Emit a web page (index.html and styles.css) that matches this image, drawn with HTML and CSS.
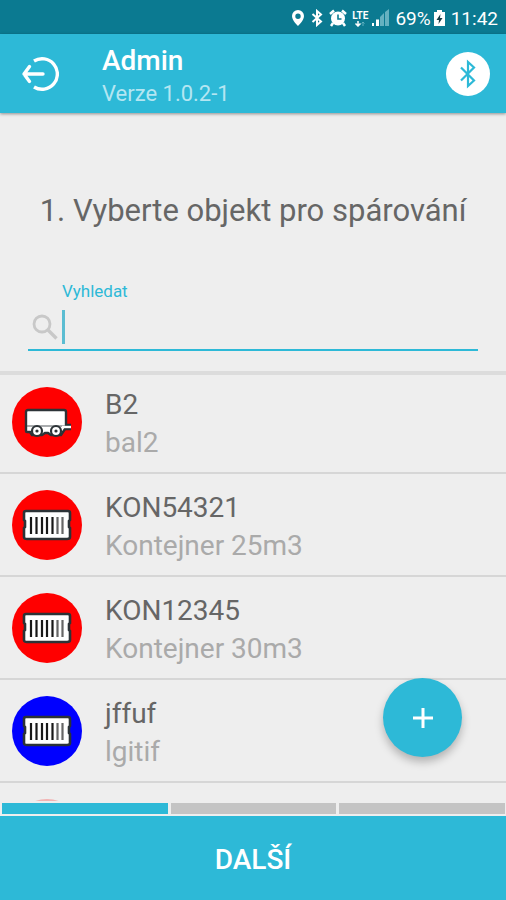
FILE: index.html
```html
<!DOCTYPE html>
<html lang="cs">
<head>
<meta charset="utf-8">
<meta name="viewport" content="width=device-width, initial-scale=1">
<title>Admin</title>
<link rel="stylesheet" href="styles.css">
</head>
<body>
<svg class="defs" aria-hidden="true">
  <symbol id="container" viewBox="0 0 50 32">
    <path d="M4 2H46Q48 2 48 4V11L47 12V18L48 19V28Q48 30 45 30H5Q2 30 2 28V19L3 18V12L2 11V4Q2 2 4 2Z" fill="#fff" stroke="#2c3337" stroke-width="2.600"/>
    <path d="M9 8V25M14.500 8V25M20 8V25M25 8V25M30.500 8V25" stroke="#181818" stroke-width="2.200"/>
    <path d="M35.500 8V25M40.500 8V25" stroke="#666" stroke-width="2.200"/>
  </symbol>
</svg>

<div class="status">
  <svg width="14" height="18" viewBox="0 0 14 18"><path fill="#fff" fill-rule="evenodd" d="M7 1a6 6 0 0 0-6 6c0 4.500 6 10 6 10s6-5.500 6-10a6 6 0 0 0-6-6Zm0 3.500a2.700 2.700 0 1 1 0 5.400 2.700 2.700 0 0 1 0-5.400Z"/></svg>
  <svg class="gap-bt" width="12" height="18" viewBox="0 0 12 18"><path fill="none" stroke="#fff" stroke-width="2" d="M1.500 5 10 12.500 6 16V2l4 3.500L1.500 13"/></svg>
  <svg class="gap-alarm" width="18" height="18" viewBox="0 0 18 18"><circle cx="9" cy="9.500" r="7" fill="#fff"/><path d="M1 5 5 1.500M17 5l-4-3.500M4 14l-2 3M14 14l2 3" stroke="#fff" stroke-width="2.500"/><path d="M9 5.500V10h3.500" fill="none" stroke="#0b7a91" stroke-width="1.600"/></svg>
  <span class="lte"><span>LTE</span>
    <svg width="12" height="6" viewBox="0 0 12 6"><path d="M4 0v5M1.500 2.500 4 5l2.500-2.500" fill="none" stroke="#fff" stroke-width="1.500"/><path d="M9 5V1M7.500 2.500 9 1l1.500 1.500" fill="none" stroke="#5eafbf"/></svg>
  </span>
  <svg class="gap-signal" width="18" height="18" viewBox="0 0 18 18"><path d="M1 14h2v3H1zM5 10.500h3V17H5z" fill="#fff"/><path d="M9 8l4-4v13H9zM14 3l4-3v17h-4z" fill="#65b1c0"/></svg>
  <span class="percent">69%</span>
  <svg width="13" height="18" viewBox="0 0 13 18"><path d="M4 1h5v2h3v14H1V3h3Z" fill="#fff"/><path d="M7.500 5 3.500 11H6l-.5 4 4-6H7Z" fill="#163c45"/></svg>
  <span class="time">11:42</span>
</div>

<header class="bar">
  <button class="logout" aria-label="Odhlásit">
    <svg width="38" height="38" viewBox="0 0 38 38" fill="none" stroke="#fff" stroke-width="3.400" stroke-linecap="round" stroke-linejoin="round"><path d="M13 6A15.300 15.300 0 1 1 13 32" stroke-linecap="butt"/><path d="M22 19H3M8.500 11.500 3 19l5.500 7.500"/></svg>
  </button>
  <div class="who">
    <h1>Admin</h1>
    <p>Verze 1.0.2-1</p>
  </div>
  <button class="bluetooth" aria-label="Bluetooth">
    <svg width="20" height="30" viewBox="0 0 20 30" fill="none" stroke="#2db9d7" stroke-width="2.200"><path d="M3 8.500 16 21.500 10 27V3l6 5.500L3 21.500"/></svg>
  </button>
</header>

<main>
  <h2>1. Vyberte objekt pro spárování</h2>
  <div class="search">
    <label for="q">Vyhledat</label>
    <div class="field">
      <svg width="26" height="26" viewBox="0 0 26 26" fill="none" stroke="#c8c8c8"><circle cx="10" cy="10" r="8" stroke-width="2.800"/><path d="m16 16 8.500 8.500" stroke-width="3.400"/></svg>
      <span class="caret"></span>
      <input id="q" type="text">
    </div>
  </div>
  <ul class="list">
    <li><span class="disc"><svg width="48" height="32" viewBox="0 0 48 32">
      <path d="M5 4H41Q43 4 43 6V19H48V23H42L38 29H28L25 27H22L19 29H9L7 26H4Q3 26 3 25V6Q3 4 5 4Z" fill="#fff" stroke="#2c3337" stroke-width="2.400"/>
      <path d="M4 20H42" stroke="#555b5f" stroke-width="1.200"/>
      <g fill="#fff" stroke="#2c3337" stroke-width="2.200"><circle cx="14" cy="25" r="5"/><circle cx="33" cy="25" r="5"/></g><g fill="#2c3337"><circle cx="14" cy="25" r="1.600"/><circle cx="33" cy="25" r="1.600"/></g>
      <path d="M39 21H48" stroke="#fff" stroke-width="2.400"/></svg></span>
      <div><strong>B2</strong><span>bal2</span></div></li>
    <li><span class="disc"><svg width="50" height="32"><use href="#container"/></svg></span>
      <div><strong>KON54321</strong><span>Kontejner 25m3</span></div></li>
    <li><span class="disc"><svg width="50" height="32"><use href="#container"/></svg></span>
      <div><strong>KON12345</strong><span>Kontejner 30m3</span></div></li>
    <li><span class="disc blue"><svg width="50" height="32"><use href="#container"/></svg></span>
      <div><strong>jffuf</strong><span>lgitif</span></div></li>
    <li><span class="disc faded"></span></li>
  </ul>
  <button class="add" aria-label="Přidat"><svg width="22" height="22" viewBox="0 0 22 22"><path d="M11 1v20M1 11h20" stroke="#fff" stroke-width="3"/></svg></button>
</main>

<div class="steps"><span class="on"></span><span></span><span></span></div>
<button class="next">DALŠÍ</button>
</body>
</html>
```
FILE: styles.css
```css
* { box-sizing: border-box; }

body {
  margin: 0;
  height: 100vh;
  display: flex;
  flex-direction: column;
  background: #eee;
  color: #666;
  font-family: Roboto, sans-serif;
}

h1, h2, p, ul { margin: 0; padding: 0; font-weight: 400; }
button { border: 0; padding: 0; background: none; font-family: inherit; cursor: pointer; }
svg { display: block; flex: none; }
.defs { position: absolute; width: 0; height: 0; }

.status {
  flex: none;
  height: 34px;
  padding: 2px 8px 0 0;
  display: flex;
  align-items: center;
  justify-content: flex-end;
  background: #0b7a91;
  color: #fff;
  font-size: 19px;
}
.gap-bt { margin-left: 6px; }
.gap-alarm { margin-left: 6px; }
.gap-signal { margin-left: 3px; }
.lte {
  margin-left: 5px;
  display: flex;
  flex-direction: column;
  align-items: center;
  font-size: 10px;
  line-height: 11px;
  font-weight: 700;
}
.percent { margin: 0 2px 0 6px; }
.time { margin-left: 5px; }

.bar {
  flex: none;
  height: 79px;
  padding: 0 16px 0 21px;
  display: flex;
  align-items: center;
  background: #2db9d7;
  color: #fff;
  box-shadow: 0 1px 3px rgba(0, 0, 0, .4);
}
.who { flex: 1; margin-left: 43px; padding-top: 6px; }
.who h1 { font-size: 28px; line-height: 34px; font-weight: 500; }
.who p { font-size: 22px; line-height: 32px; color: #b4e6f2; }
.bluetooth {
  width: 44px;
  height: 44px;
  border-radius: 50%;
  background: #fff;
  display: grid;
  place-items: center;
}

main {
  position: relative;
  flex: 1;
  min-height: 0;
  display: flex;
  flex-direction: column;
  overflow: hidden;
  padding-top: 76px;
  margin-top: 2px;
}
h2 { font-size: 31px; line-height: 40px; text-align: center; }

.search { margin: 50px 28px 20px; }
.search label { display: block; margin-left: 34px; font-size: 17px; line-height: 20px; color: #2db9d7; }
.field {
  display: flex;
  align-items: center;
  height: 50px;
  padding: 3px 0 0 4px;
  border-bottom: 2px solid #2db9d7;
}
.caret { width: 3px; height: 34px; margin-left: 4px; background: #5bbdd2; }
.field input {
  flex: 1;
  min-width: 0;
  border: 0;
  outline: 0;
  background: none;
  font: 26px Roboto, sans-serif;
  color: #666;
}

.list { list-style: none; box-shadow: inset 0 4px #dcdcdc; }
.list li {
  height: 103px;
  padding: 0 12px;
  display: flex;
  align-items: center;
  gap: 23px;
  border-bottom: 2px solid #d6d6d6;
}
.list div { padding-top: 4px; }
.list strong, .list div span { display: block; font-size: 28px; line-height: 38px; font-weight: 400; }
.list div span { color: #aaa; }
.disc {
  width: 70px;
  height: 70px;
  border-radius: 50%;
  background: #f00;
  display: grid;
  place-items: center;
}
.blue { background: #00f; }
.faded { opacity: .25; }

.add {
  position: absolute;
  right: 44px;
  bottom: 44px;
  width: 79px;
  height: 79px;
  border-radius: 50%;
  background: #2db9d7;
  display: grid;
  place-items: center;
  box-shadow: 0 5px 9px rgba(0, 0, 0, .25);
}

.steps { flex: none; display: flex; gap: 3px; padding: 2px 1px 2px 2px; background: #eee; }
.steps span { flex: 1; height: 11px; background: #c4c4c4; }
.steps .on { background: #2db9d7; }
.next {
  flex: none;
  height: 84px;
  padding-top: 3px;
  background: #2db9d7;
  color: #fff;
  font-size: 28px;
  font-weight: 500;
}
```
